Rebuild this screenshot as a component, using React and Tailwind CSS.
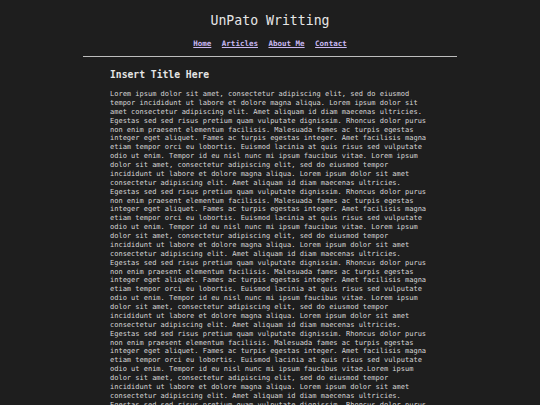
import React from 'react';

const BLOCK =
  'Lorem ipsum dolor sit amet, consectetur adipiscing elit, sed do eiusmod tempor incididunt ut labore et dolore magna aliqua. Lorem ipsum dolor sit amet consectetur adipiscing elit. Amet aliquam id diam maecenas ultricies. Egestas sed sed risus pretium quam vulputate dignissim. Rhoncus dolor purus non enim praesent elementum facilisis. Malesuada fames ac turpis egestas integer eget aliquet. Fames ac turpis egestas integer. Amet facilisis magna etiam tempor orci eu lobortis. Euismod lacinia at quis risus sed vulputate odio ut enim. Tempor id eu nisl nunc mi ipsum faucibus vitae.';

const TEXT = [BLOCK, BLOCK, BLOCK, BLOCK].join(' ') + BLOCK + ' ' + BLOCK;

const LINKS = ['Home', 'Articles', 'About Me', 'Contact'];

export default function App() {
  return (
    <div className="min-h-screen bg-[#1e1e1e] text-[#d6d6d6] font-['DejaVu_Sans_Mono',monospace]">
      <header className="pt-[12px] text-center">
        <h1 className="text-[13.2px] leading-[18px] text-[#e6e6e6]">UnPato Writting</h1>
        <nav className="mt-[9px] flex justify-center gap-[10.5px] text-[7.5px] leading-[10px] font-bold">
          {LINKS.map((l) => (
            <a key={l} href="#" className="text-[#c9b8f2] underline">
              {l}
            </a>
          ))}
        </nav>
      </header>
      <hr className="mx-auto mt-[7px] w-[374px] border-t border-[#bdbdbd]" />
      <main className="mx-auto w-[374px] px-[27px] pb-6">
        <h2 className="mt-[12px] text-[9.7px] leading-[12px] font-bold text-[#e6e6e6]">Insert Title Here</h2>
        <p className="mt-[9px] w-[76ch] text-[7px] leading-[8.87px]">{TEXT}</p>
      </main>
    </div>
  );
}
